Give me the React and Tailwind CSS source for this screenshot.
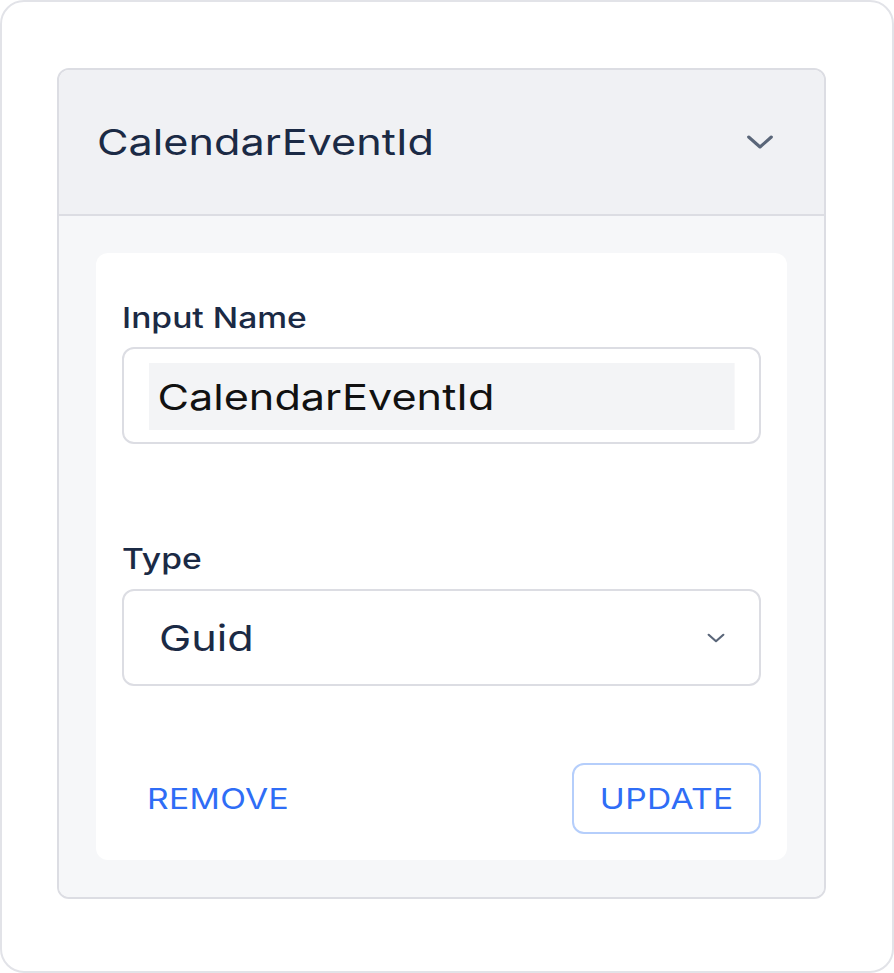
import React, { useState } from 'react';

const Chevron = ({ className, strokeWidth = 2 }) => (
  <svg viewBox="0 0 28 24" fill="none" stroke="currentColor" strokeWidth={strokeWidth} strokeLinecap="round" strokeLinejoin="round" className={className}>
    <path d="M6 8.5l8 7 8-7" />
  </svg>
);

// the text in this panel is drawn a bit wide, so every label gets a horizontal stretch
const wide = 'inline-block scale-x-[1.2] origin-left';

const App = () => {
  const [name, setName] = useState('CalendarEventId');
  const [type] = useState('Guid');

  return (
    <div className="w-[894px] h-[973px] bg-white font-['Inter',sans-serif]">
      <div className="w-full h-full rounded-[24px] border-2 border-[#e2e3e8] bg-white pt-[66px] pl-[55px] pr-[66px] pb-[72px]">
        <div className="h-full rounded-[12px] border-2 border-[#dcdde3] overflow-hidden flex flex-col">
          <div className="h-[146px] shrink-0 bg-[#f0f1f4] border-b-2 border-[#dcdde3] flex items-center justify-between pl-[38px] pr-[44px]">
            <h2 className={`text-[36px] text-[#1b2a45] font-normal ${wide}`}>CalendarEventId</h2>
            <Chevron className="w-[40px] h-[34px] text-[#5a6679]" strokeWidth={2.2} />
          </div>
          <div className="flex-1 bg-[#f6f7f9] p-[37px]">
            <div className="h-full bg-white rounded-[12px] pt-[47px] px-[26px] pb-[26px] flex flex-col">
              <label className="text-[28px] leading-[36px] text-[#1b2a45] font-medium">
                <span className={wide}>Input Name</span>
              </label>
              <div className="mt-[11px] h-[97px] border-2 border-[#dcdde3] rounded-[12px] pt-[14px] pl-[25px] pr-[25px]">
                <input
                  value={name}
                  onChange={(e) => setName(e.target.value)}
                  className="block w-[487.5px] h-[67px] bg-[#f3f4f6] px-[7px] text-[36px] text-[#111] outline-none scale-x-[1.2] origin-left"
                />
              </div>
              <label className="mt-[97px] text-[28px] leading-[36px] text-[#1b2a45] font-medium">
                <span className={wide}>Type</span>
              </label>
              <div className="mt-[12px] h-[97px] border-2 border-[#dcdde3] rounded-[12px] flex items-center justify-between pl-[35px] pr-[30px]">
                <span className={`text-[36px] text-[#1b2a45] ${wide}`}>{type}</span>
                <Chevron className="w-[26px] h-[22px] text-[#5a6679]" strokeWidth={2.4} />
              </div>
              <div className="mt-auto flex items-center justify-between">
                <button className="pl-[25px] h-[71px] text-[28px] text-[#2f6df6] tracking-[0.01em] text-left">
                  <span className={wide}>REMOVE</span>
                </button>
                <button className="w-[189px] h-[71px] border-2 border-[#b5cefb] rounded-[12px] text-[28px] text-[#2f6df6] tracking-[0.01em] flex items-center justify-center">
                  <span className="inline-block scale-x-[1.2]">UPDATE</span>
                </button>
              </div>
            </div>
          </div>
        </div>
      </div>
    </div>
  );
};

export default App;
